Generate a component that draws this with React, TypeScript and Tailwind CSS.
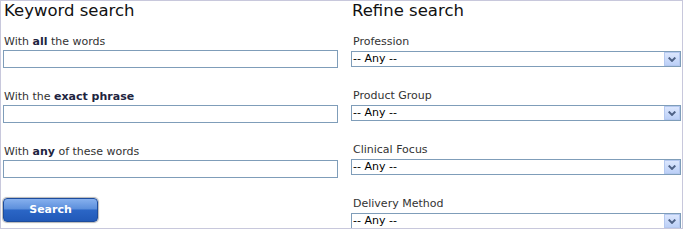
import React from 'react';

const font = { fontFamily: '"DejaVu Sans", Verdana, sans-serif' };

const TextField: React.FC<{ label: React.ReactNode }> = ({ label }) => (
  <div className="flex flex-col">
    <label className="text-[11px] leading-[14px] text-[#333] mb-px ml-[1px]">{label}</label>
    <input type="text" className="block h-[18px] w-[335px] border border-[#7f9db9] bg-white outline-none" />
  </div>
);

const Dropdown: React.FC<{ label: string }> = ({ label }) => (
  <div className="flex flex-col">
    <label className="text-[11px] leading-[14px] text-[#333] mb-[2px] ml-[2px]">{label}</label>
    <div className="relative w-[330px] h-[16px]">
      <select className="block appearance-none w-full h-[16px] border border-[#7f9db9] bg-white text-[11px] leading-[14px] text-black pl-[1px] py-0 outline-none">
        <option>-- Any --</option>
      </select>
      <span className="absolute right-[1px] top-[1px] w-[16px] h-[14px] border border-[#b4c8ef] bg-[linear-gradient(to_bottom,#dbe6fd,#bcd0f7)] flex items-center justify-center pointer-events-none">
        <svg width="8" height="5" viewBox="0 0 8 5">
          <path d="M0.7 0.6 L4 3.9 L7.3 0.6" fill="none" stroke="#4d6185" strokeWidth="2" />
        </svg>
      </span>
    </div>
  </div>
);

export default function App() {
  return (
    <div style={font} className="w-[684px] h-[230px] bg-white">
      <div className="w-[683px] h-[229px] border border-[#c8c8dc] flex overflow-hidden">
        <div className="w-[338px] pl-[2px] flex flex-col">
          <h2 className="text-[16.5px] leading-[20px] text-[#111] ml-[1px] mb-[14px]">Keyword search</h2>
          <div className="flex flex-col gap-[22px]">
            <TextField label={<>With <b className="text-[#1e2440]">all</b> the words</>} />
            <TextField label={<>With the <b className="text-[#1e2440]">exact phrase</b></>} />
            <TextField label={<>With <b className="text-[#1e2440]">any</b> of these words</>} />
          </div>
          <div className="mt-[20px]">
            <button className="block w-[95px] h-[24px] rounded-[4px] border border-[#1d4c9c] bg-[linear-gradient(to_bottom,#86b0ee_0%,#5c8fdc_45%,#2b66c6_50%,#2159b8_100%)] shadow-[0_0_1px_1px_#b8b8b8] text-white text-[11px] font-bold">
              Search
            </button>
          </div>
        </div>
        <div className="ml-[12px] flex flex-col">
          <h2 className="text-[16.5px] leading-[20px] text-[#111] ml-[1px] mb-[14px]">Refine search</h2>
          <div className="flex flex-col gap-[22px]">
            <Dropdown label="Profession" />
            <Dropdown label="Product Group" />
            <Dropdown label="Clinical Focus" />
            <Dropdown label="Delivery Method" />
          </div>
        </div>
      </div>
    </div>
  );
}
